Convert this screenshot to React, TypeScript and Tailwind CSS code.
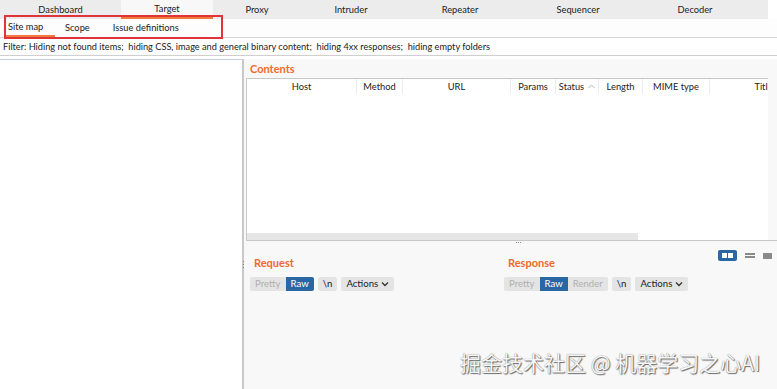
import React from "react";

const topTabs: { label: string; w: string; active?: boolean }[] = [
  { label: "Dashboard", w: "w-[121px]" },
  { label: "Target", w: "w-[92px]", active: true },
  { label: "Proxy", w: "w-[88px]" },
  { label: "Intruder", w: "w-[100px]" },
  { label: "Repeater", w: "w-[118px]" },
  { label: "Sequencer", w: "w-[118px]" },
  { label: "Decoder", w: "w-[116px]" },
];

const cols: { label: string; w: string; arrow?: boolean }[] = [
  { label: "Host", w: "w-[110px]" },
  { label: "Method", w: "w-[46px]" },
  { label: "URL", w: "w-[108px]" },
  { label: "Params", w: "w-[45px]" },
  { label: "Status", w: "w-[43px]", arrow: true },
  { label: "Length", w: "w-[44px]" },
  { label: "MIME type", w: "w-[67px]" },
  { label: "Title", w: "w-[108px]" },
];

function Chevron() {
  return (
    <svg width="8" height="6" viewBox="0 0 8 6" className="ml-[3px]">
      <path d="M1 1.5 L4 4.5 L7 1.5" stroke="#333" strokeWidth="1.3" fill="none" />
    </svg>
  );
}

function Btn({ children, kind }: { children: React.ReactNode; kind: "dim" | "on" | "plain" }) {
  const cls =
    kind === "on"
      ? "bg-[#2a66a3] text-white"
      : kind === "dim"
      ? "bg-[#e4e4e4] text-[#b0b0b0]"
      : "bg-[#e4e4e4] text-[#222]";
  return <div className={`h-[14px] px-[5px] flex items-center ${cls}`}>{children}</div>;
}

function Editor({ title, render }: { title: string; render?: boolean }) {
  return (
    <div className="flex flex-col">
      <div className="text-[11px] font-bold text-[#ee6a2f] leading-[14px] pl-[4px]">{title}</div>
      <div className="flex items-center mt-[7px] text-[9.6px] leading-[14px]">
        <div className="flex rounded-[2px] overflow-hidden">
          <Btn kind="dim">Pretty</Btn>
          <Btn kind="on">Raw</Btn>
          {render && <Btn kind="dim">Render</Btn>}
        </div>
        <div className="ml-[4px] rounded-[2px] overflow-hidden">
          <Btn kind="plain">\n</Btn>
        </div>
        <div className="ml-[4px] rounded-[2px] overflow-hidden">
          <Btn kind="plain">
            Actions
            <Chevron />
          </Btn>
        </div>
      </div>
    </div>
  );
}

export default function App() {
  return (
    <div
      className="relative w-[777px] h-[389px] overflow-hidden bg-white flex flex-col text-[#222]"
      style={{ fontFamily: 'Lato, "Noto Sans CJK SC", sans-serif' }}
    >
      {/* top tabs */}
      <div className="h-[19px] flex shrink-0">
        <div className="flex bg-[#ececec] w-[768px]">
          {topTabs.map((t) => (
            <div
              key={t.label}
              className={`${t.w} h-full flex items-center justify-center text-[9.3px] ${
                t.active ? "bg-[#f8f8f8] border-b-2 border-[#ef7a3a]" : ""
              }`}
            >
              {t.label}
            </div>
          ))}
        </div>
      </div>

      {/* sub tabs */}
      <div className="h-[19px] shrink-0 flex items-center text-[9.3px] border-b border-[#d6d6d6] bg-[#fdfdfd]">
        <div className="ml-[5px] w-[50px] h-full pl-[3px] flex items-center border-b-2 border-[#ef7a3a]">
          Site map
        </div>
        <div className="ml-[10px]">Scope</div>
        <div className="ml-[23px]">Issue definitions</div>
      </div>

      {/* filter */}
      <div className="h-[18px] shrink-0 flex items-center pl-[3px] text-[9.2px] border-b border-[#cfcfcf] whitespace-pre">
        Filter: Hiding not found items;  hiding CSS, image and general binary content;  hiding 4xx responses;  hiding empty folders
      </div>

      {/* main */}
      <div className="flex flex-1 min-h-0 mt-[3px]">
        <div className="w-[244px] shrink-0 bg-white border-t border-[#c9cfe0] border-r-2 border-r-[#c8c8c8]" />
        <div className="flex-1 min-w-0 bg-[#f8f8f8] flex flex-col relative">
          <div className="text-[11px] font-bold text-[#ee6a2f] leading-[14px] pl-[6px] pt-[3px]">Contents</div>
          <div className="ml-[2px] mr-[9px] mt-[2px] h-[162px] bg-white border-l border-t border-[#c8c8c8] flex flex-col overflow-hidden">
            <div className="h-[15px] flex text-[9.3px] bg-[#fafafa] shrink-0">
              {cols.map((c) => (
                <div
                  key={c.label}
                  className={`${c.w} shrink-0 flex items-center justify-center border-r border-[#ececec] bg-white`}
                >
                  {c.label}
                  {c.arrow && (
                    <svg width="7" height="5" viewBox="0 0 7 5" className="ml-[4px]">
                      <path d="M0.5 4 L3.5 1 L6.5 4" stroke="#aaa" strokeWidth="0.9" fill="none" />
                    </svg>
                  )}
                </div>
              ))}
            </div>
            <div className="flex-1" />
            <div className="h-[7px] w-[391px] bg-[#e6e6e6] shrink-0" />
          </div>
          <div className="ml-[2px] border-t border-[#c8c8c8] h-0" />
          {/* splitter dots */}
          <div className="flex justify-center mt-[1px] h-[3px]">
            <div className="flex gap-[1px] ml-[16px]">
              <div className="w-[1px] h-[1px] bg-[#888]" />
              <div className="w-[1px] h-[1px] bg-[#888]" />
              <div className="w-[1px] h-[1px] bg-[#888]" />
            </div>
          </div>
          {/* view toggles */}
          <div className="flex justify-end items-center gap-[8px] pr-[5px] mt-[5px] h-[11px]">
            <div className="w-[19px] h-[11px] bg-[#2a66a3] rounded-[2px] flex items-center justify-center gap-[1px]">
              <div className="w-[5px] h-[5px] bg-white" />
              <div className="w-[5px] h-[5px] bg-white" />
            </div>
            <div className="w-[10px] flex flex-col gap-[1.5px]">
              <div className="h-[2px] bg-[#8a8a8a]" />
              <div className="h-[2px] bg-[#8a8a8a]" />
            </div>
            <div className="w-[9px] h-[6px] bg-[#8a8a8a]" />
          </div>
          <div className="flex mt-[-5px]">
            <div className="w-[260px] pl-[6px] relative">
              <div className="absolute left-[-1px] top-[5px] flex flex-col gap-[2px]">
                <div className="w-[1px] h-[1px] bg-[#888]" />
                <div className="w-[1px] h-[1px] bg-[#888]" />
                <div className="w-[1px] h-[1px] bg-[#888]" />
              </div>
              <Editor title="Request" />
            </div>
            <div>
              <Editor title="Response" render />
            </div>
          </div>
        </div>
      </div>

      {/* red annotation box */}
      <div className="absolute left-[4px] top-[15px] w-[219px] h-[24px] border-2 border-[#e0343a] pointer-events-none" />

      {/* watermark */}
      <div
        className="absolute left-[460px] top-[348px] text-[21px] leading-[28px] text-[#f6f6f6] whitespace-nowrap [text-shadow:1px_1px_1px_rgba(0,0,0,0.55),0_0_1px_rgba(0,0,0,0.5)]"
        style={{ fontFamily: '"Noto Sans CJK SC", "Noto Sans", sans-serif' }}
      >
        掘金技术社区 @ 机器学习之心AI
      </div>
    </div>
  );
}
